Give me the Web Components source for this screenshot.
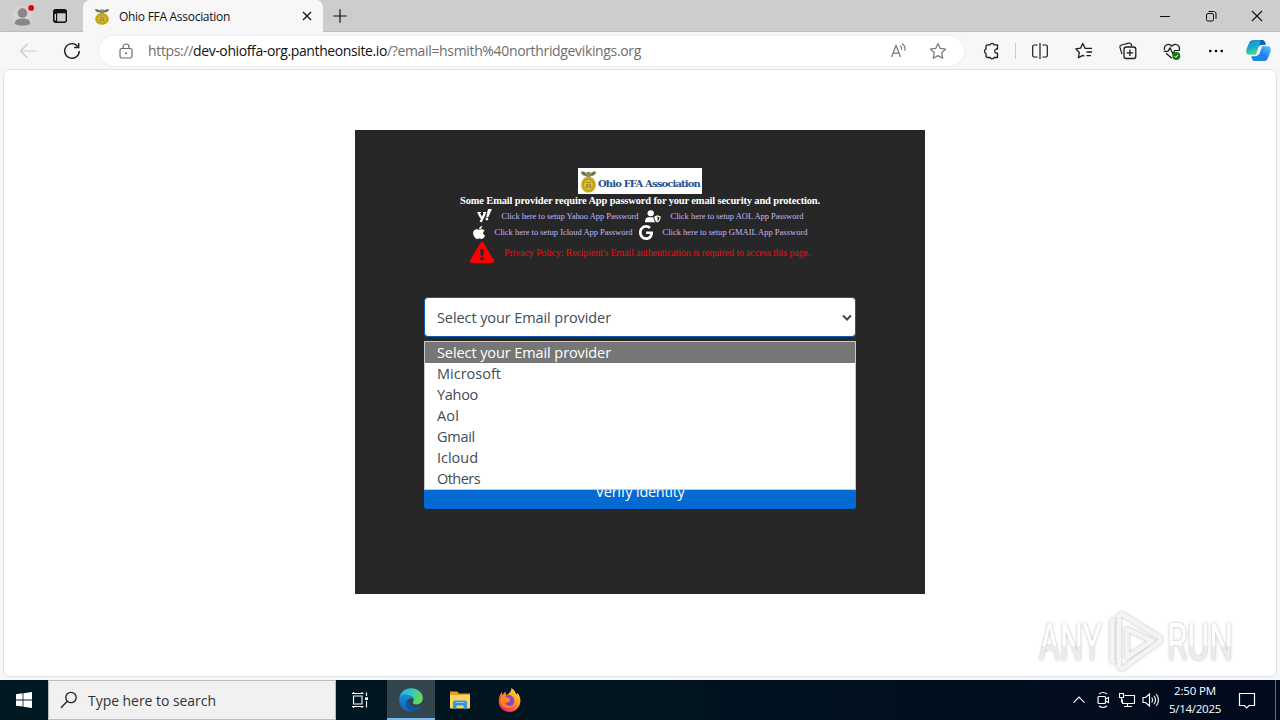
<!DOCTYPE html>
<html lang="en">
<head>
<meta charset="utf-8">
<title>Ohio FFA Association</title>
<style>
  html, body {
    margin: 0;
    height: 100%;
    overflow: hidden;
  }
  body {
    font-family: "Open Sans", "Noto Sans", sans-serif;
    background: #f7f7f7;
  }
</style>
</head>
<body>
<desktop-screen></desktop-screen>

<script>
// [viewBox, markup]
const ICONS = {
  profile: ['0 0 24 24', '<circle cx="12" cy="12" r="11" fill="#d6d4d2"/><circle cx="12" cy="8.4" r="5" fill="#8a8886"/><path d="M4 19.6c0-4 3-5.4 8-5.4s8 1.4 8 5.4c-2 2.6-14 2.6-16 0z" fill="#8a8886"/><circle cx="21" cy="3" r="3" fill="#e3000f"/>'],
  workspaces: ['0 0 16 16', '<rect x="1.7" y="1.7" width="12.6" height="12.6" rx="2" fill="none" stroke="#111" stroke-width="1.4"/><path d="M1.5 4.2V3.5a2 2 0 0 1 2-2h9a2 2 0 0 1 2 2v1.700H5.200v9H3.500a2 2 0 0 1-2-2z" fill="#111"/><path d="M3.300 6v6.500" stroke="#d0d0d0" stroke-width="1.400"/>'],
  emblem: ['0 0 20 24', '<path d="M10 7C7 2 4 1 1 2c1 3 3 4 6 4l3 3 3-3c3 0 5-1 6-4-3-1-6 0-9 5z" fill="#65734a"/><path d="M7.5 2h5l-.5 6h-4z" fill="#888c60"/><path d="M10 7c4 0 8 2.5 8.5 8 .3 5-3.5 8.5-8.5 8.5S1.200 20 1.500 15C2 9.500 6 7 10 7z" fill="#c9ac1c"/><ellipse cx="10" cy="15.500" rx="5.800" ry="5.700" fill="#ddc23a" stroke="#a08a20" stroke-width=".8"/><path d="M7 13h6M7 15.500h6M6.500 18h7M8 15.500v2.500M12 15.500v2.500" stroke="#857a2c" stroke-width=".9" fill="none"/>'],
  close: ['0 0 12 12', '<path d="M2 2l8 8M10 2l-8 8" stroke="#111" stroke-width="1.300"/>'],
  plus: ['0 0 16 16', '<path d="M8 1.300v13.400M1.300 8h13.400" stroke="#111" stroke-width="1.200"/>'],
  minimize: ['0 0 12 12', '<path d="M1 6.500h10" stroke="#111"/>'],
  restore: ['0 0 12 12', '<rect x="1.500" y="3.500" width="7" height="7.500" rx="1.500" fill="none" stroke="#111"/><path d="M3.500 1.500h5a2.200 2.200 0 0 1 2.500 2.500v5" fill="none" stroke="#111"/>'],
  winclose: ['0 0 12 12', '<path d="M1 1l10 10M11 1L1 11" stroke="#111" stroke-width="1.100"/>'],
  back: ['0 0 18 18', '<path d="M17 9H2M8.500 2L1.500 9l7 7" fill="none" stroke="#c9c9c9" stroke-width="1.200"/>'],
  reload: ['0 0 18 18', '<path d="M14.800 4.500A7.300 7.300 0 1 0 16.300 9" fill="none" stroke="#222" stroke-width="1.400"/><path d="M15.700.900v4.600h-4.600" fill="none" stroke="#222" stroke-width="1.400"/>'],
  lock: ['0 0 16 18', '<rect x="2" y="6.500" width="12" height="9.500" rx="1.800" fill="none" stroke="#6b6b6b" stroke-width="1.200"/><path d="M5 6.500V5a3 3 0 0 1 6 0v1.500" fill="none" stroke="#6b6b6b" stroke-width="1.200"/><circle cx="8" cy="11.300" r="1" fill="#6b6b6b"/>'],
  read: ['0 0 18 18', '<path d="M2.500 15L7 3.500 11.500 15M4 11.200h6" fill="none" stroke="#767676" stroke-width="1.200"/><path d="M11.200 3.800q2 1.500 1.300 4M13 1.500q4.200 3 2.600 7.300" fill="none" stroke="#767676" stroke-width="1.100"/>'],
  star: ['0 0 18 18', '<path d="M9 1.500l2.300 4.900 5.300.700-3.900 3.700 1 5.400L9 13.600l-4.700 2.600 1-5.400L1.400 7.100l5.300-.700z" fill="none" stroke="#767676" stroke-width="1.200" stroke-linejoin="round"/>'],
  puzzle: ['0 0 18 18', '<path d="M5.500 2.800h2.700a2 2 0 0 1 3.800 0h3.500v4.200h-1.300a2.200 2.200 0 0 0 0 4.200h1.300v4.300H12a2 2 0 0 1-3.800 0H5.500A1.500 1.500 0 0 1 4 14v-2.700a2.200 2.200 0 0 1 0-4.200V4.300a1.500 1.500 0 0 1 1.500-1.500z" fill="none" stroke="#1b1b1b" stroke-width="1.300" stroke-linejoin="round"/>'],
  split: ['0 0 18 18', '<path d="M6.500 3H3.300A1.500 1.500 0 0 0 1.700 4.500v9A1.500 1.500 0 0 0 3.300 15h3.200M11.500 3h3.200a1.500 1.500 0 0 1 1.600 1.500v9a1.500 1.500 0 0 1-1.600 1.500h-3.200M9 1v16" fill="none" stroke="#1b1b1b" stroke-width="1.200"/>'],
  favorites: ['0 0 18 18', '<path d="M11 6.300h-1L7.700 1.500 5.500 6.200.800 6.900l3.500 3.600-.900 5.300 4.300-2.400 1.600.900M11 6.300h6M11.500 10h5.500M11.500 13.600h4.500" fill="none" stroke="#1b1b1b" stroke-width="1.300" stroke-linejoin="round"/>'],
  collections: ['0 0 18 18', '<path d="M3 12.200L1 5.400A2 2 0 0 1 2.400 3l7.500-1.900A2 2 0 0 1 12.300 2.500l.400 1.500" fill="none" stroke="#1b1b1b" stroke-width="1.200"/><rect x="5" y="5" width="11.800" height="11.500" rx="2.300" fill="none" stroke="#1b1b1b" stroke-width="1.300"/><path d="M10.900 7.500v6.600M7.600 10.800h6.600" stroke="#1b1b1b" stroke-width="1.300"/>'],
  essentials: ['0 0 18 18', '<path d="M1.500 8C.500 2.500 6 .800 8.800 4.200 11.500.800 17.500 2.500 16.200 8M3 11.200l5.800 5" fill="none" stroke="#1b1b1b" stroke-width="1.300"/><path d="M.700 9.300H5l2-3.500 3 6.200 1.700-3.500H17" fill="none" stroke="#1b1b1b" stroke-width="1.200"/><circle cx="13.300" cy="14" r="4" fill="#107c10"/><path d="M11.500 14l1.300 1.300 2.300-2.500" fill="none" stroke="#fff"/>'],
  more: ['0 0 18 18', '<circle cx="3.300" cy="9" r="1.300"/><circle cx="9" cy="9" r="1.300"/><circle cx="14.700" cy="9" r="1.300"/>'],
  copilot: ['0 0 24 24', '<defs><linearGradient id="a" x1="0" y1="0" x2=".400" y2="1"><stop offset="0" stop-color="#1687d9"/><stop offset=".500" stop-color="#18aacd"/><stop offset="1" stop-color="#57d68c"/></linearGradient><linearGradient id="b" x1="1" y1="0" x2="0" y2="1"><stop offset="0" stop-color="#5bc4fb"/><stop offset=".500" stop-color="#267ff0"/><stop offset="1" stop-color="#118fd8"/></linearGradient></defs><path d="M7.500 1h8q2 0 2.600 2L19 6h-4c-2 0-2.500 2-3 4l-2 6.500H3C0 16.500-.300 13 .700 10L3 4Q4 1 7.500 1z" fill="url(#a)"/><path d="M14 1h1.500q2 0 2.600 2L19 6h-4l-2 1z" fill="#125fac"/><path d="M16.500 23h-8q-2 0-2.600-2L5 18h4c2 0 2.500-2 3-4l2-6.500h7c3 0 3.300 3.500 2.300 6.500L21 20q-1 3-4.500 3z" fill="url(#b)"/><path d="M12.500 7.500h3l-3 9h-3z" fill="#f3fbff"/>'],
  yahoo: ['0 0 15 14', '<path d="M1.700 4l2.800 5.200M8 4L3.700 13" stroke="#fff" stroke-width="2.300" fill="none"/><path d="M.300 3.500h3.700M6 3.500h3.300" stroke="#fff" stroke-width="1"/><path d="M11 0h4l-3.600 8H9.300z" fill="#fff"/><circle cx="9.900" cy="10" r="1.400" fill="#fff"/>'],
  usershield: ['0 0 16 14', '<circle cx="5.700" cy="3.500" r="3.200" fill="#fff"/><path d="M0 13.200c0-4.200 1.500-5.500 4-5.500h3.500l1 .300c0 2 .700 4 2 5.200z" fill="#fff"/><path d="M12.500 5.700l3.200 1.300c0 3.200-1 5.200-3.200 6.500-2.200-1.300-3.200-3.300-3.200-6.500z" fill="#fff"/><path d="M12.500 7v5c1.200-.900 1.900-2.200 2-4.200z" fill="#272727"/>'],
  apple: ['0 30 376 452', '<path fill="#fff" d="M318.700 268.700c-.200-36.700 16.400-64.400 50-84.800-18.800-26.900-47.200-41.700-84.700-44.600-35.500-2.800-74.300 20.700-88.500 20.700-15 0-49.400-19.700-76.400-19.700C63.300 141.200 4 184.800 4 273.500q0 39.300 14.400 81.200c12.800 36.700 59 126.700 107.200 125.200 25.200-.600 43-17.900 75.800-17.900 31.800 0 48.300 17.900 76.400 17.900 48.600-.700 90.400-82.500 102.600-119.300-65.200-30.700-61.700-90-61.700-91.900zm-56.600-164.200c27.300-32.400 24.800-61.900 24-72.500-24.100 1.400-52 16.400-67.900 34.900-17.500 19.800-27.800 44.300-25.600 71.900 26.100 2 49.900-11.400 69.500-34.300z"/>'],
  google: ['0 8 488 496', '<path fill="#fff" d="M488 261.800C488 403.300 391.100 504 248 504 110.800 504 0 393.200 0 256S110.800 8 248 8c66.800 0 123 24.500 166.300 64.900l-67.500 64.900C258.500 52.600 94.300 116.600 94.300 256c0 86.500 69.100 156.600 153.700 156.600 98.200 0 135-70.400 140.800-106.900H248v-85.300h236.100c2.300 12.700 3.900 24.900 3.900 41.400z"/>'],
  warning: ['0 0 576 512', '<path fill="#f00" d="M569.500 440C588 472 564.800 512 527.900 512H48.100c-37 0-60-40-41.600-72L246.400 24c18.500-32 64.700-32 83.200 0zM288 354a46 46 0 1 0 0 92 46 46 0 0 0 0-92zm-43.700-165.300l7.400 136c.400 6.300 5.600 11.300 12 11.300h48.600c6.400 0 11.600-5 12-11.300l7.400-136c.400-6.900-5.100-12.700-12-12.700h-63.400c-6.900 0-12.400 5.800-12 12.700z"/>'],
  caret: ['0 0 10 8', '<path d="M1 1.500l4 4 4-4" fill="none" stroke="#444" stroke-width="2"/>'],
  windows: ['0 0 16 16', '<path d="M0 2.200l6.600-.900v6.200H0zM7.400 1.200L16 0v7.500H7.400zM0 8.400h6.600v6.200L0 13.700zM7.400 8.400H16V16l-8.600-1.200z" fill="#fff"/>'],
  search: ['0 0 18 18', '<circle cx="11" cy="6.500" r="5.200" fill="none" stroke="#222" stroke-width="1.300"/><path d="M7.200 10.300L1 16.700" stroke="#222" stroke-width="1.400"/>'],
  taskview: ['0 0 18 18', '<path d="M1 2.500h11.500M1 15.500h11.500M2.500 5h8.500v8H2.500zM2.500 2.500V1M11 2.500V1M2.500 15.500V17M11 15.500V17M15.500 1.500v3.500M15.500 10v6.500" fill="none" stroke="#fff" stroke-width="1.100"/><path d="M14 6.300h3v2.700h-3z" fill="#fff"/>'],
  edge: ['0 0 24 24', '<defs><linearGradient id="e" x1="0" y1="0" x2="1" y2=".300"><stop offset="0" stop-color="#2aa7db"/><stop offset=".500" stop-color="#30c5cd"/><stop offset="1" stop-color="#63d956"/></linearGradient><linearGradient id="f" x1="0" y1="0" x2="0" y2="1"><stop offset="0" stop-color="#168fd8"/><stop offset="1" stop-color="#1264b8"/></linearGradient></defs><path d="M.300 11C1 4 6 .200 12 .200c7 0 11.800 4.600 11.800 9.800 0 4-3 6.400-6.500 6.400-2.500 0-4-.900-3.500-1.900 2.600-3-.300-7-4.800-6.900C5 7.700 1 9 .300 11z" fill="url(#e)"/><path d="M.200 12C.400 8 4 6 8 6.400c3 .300 5.500 2 5.700 4.500-1-1.400-4.600-.500-5.200 2.600C7.600 18 12 22 17 20.400c2-.600 3.500-1 4.600-1.800C19 22.300 16 23.800 12 23.800 5 23.800 0 18.500.200 12z" fill="url(#f)"/><path d="M8.800 11C4.500 16 8 23 13.200 23.700c4 .100 6.800-2.200 8.600-5 .400-.700-.200-1-.800-.700C15.500 20.500 9 17.500 8.800 11z" fill="#1454a0"/>'],
  folder: ['0 0 22 20', '<path d="M1 1.500h7l2 2h11v5H1z" fill="#e6a21a"/><path d="M1 5h20v13.500H1z" fill="#fcd462"/><path d="M4 12q0-1.500 1.500-1.500h11Q18 10.500 18 12v7h-3.500v-3.500h-7V19H4z" fill="#3995d0"/><path d="M6.500 12.500h9" stroke="#7dc8ef"/>'],
  firefox: ['0 0 24 24', '<defs><linearGradient id="g" x1="1" y1="0" x2=".200" y2="1"><stop offset="0" stop-color="#fff04b"/><stop offset=".450" stop-color="#ff9a1f"/><stop offset=".800" stop-color="#ff4054"/><stop offset="1" stop-color="#e4217b"/></linearGradient></defs><path d="M14 0c3 2 4.500 4 5 6.500L20.500 5C23 8 24 12 23 15.500 21.500 21 17 24 12 24S1.500 20.500.800 15C.300 11 1.500 7 4 4l.700 3L7.500 3.500 8.500 7C10.500 6.500 14 4 14 0z" fill="url(#g)"/><path d="M7 8.500c3-2.500 8-1.500 9.500 2 1.500 4-1 7.500-4.500 7.500-2.500 0-4.500-1.500-5-3.500 3 1 5-.500 6-2-2.500 0-3-2.500-6-4z" fill="#8046d6"/><path d="M3.500 9.500c2-2 5-1.500 6.500.500l3 .500c0 1.500-2 2-3 3-.700 1.500-2 1.500-3 1 1 3 5 4.500 8 3-3 4-10 3-12-2-.700-2-.500-4 .500-6z" fill="#ff8a16"/>'],
  chevron: ['0 0 12 12', '<path d="M.500 8.700L6 3.200l5.500 5.500" fill="none" stroke="#fff" stroke-width="1.200"/>'],
  meet: ['0 0 16 18', '<rect x="3" y="5.500" width="7.500" height="7" rx="1" fill="none" stroke="#fff" stroke-width="1.200"/><path d="M10.500 8l3-1.500v5l-3-1.500M4 3q4-3 8 0M4 15q4 3 8 0" fill="none" stroke="#fff" stroke-width="1.100"/>'],
  network: ['0 0 18 18', '<path d="M6.500 4.500h10v8h-12v-4M9.500 12.500v3M6 15.500h8M1.500 2.500h4v4h-4zM3.500 6.500v5" fill="none" stroke="#fff" stroke-width="1.100"/>'],
  volume: ['0 0 18 18', '<path d="M1 6.500h2.500L7.500 3v12l-4-3.500H1zM9.700 6.500q1.600 2.500 0 5M12 4.800q3 4.200 0 8.400M14.300 3q4.300 6 0 12" fill="none" stroke="#fff" stroke-width="1.100"/>'],
  notice: ['0 0 18 18', '<path d="M1.500 2.500h15v12H11l-2.300 2.300-2.200-2.300h-5z" fill="none" stroke="#fff" stroke-width="1.200"/>']
};

class UiIcon extends HTMLElement {
  connectedCallback() {
    const [box, body] = ICONS[this.getAttribute('name')];
    const w = this.getAttribute('w') || 18;
    const h = this.getAttribute('h') || w;
    this.attachShadow({ mode: 'open' }).innerHTML = `
      <style>
        :host { display: block; flex: none; }
        svg { display: block; }
      </style>
      <svg width="${w}" height="${h}" viewBox="${box}" preserveAspectRatio="none">${body}</svg>
    `;
  }
}
customElements.define('ui-icon', UiIcon);

// One line of text, tracked so that it takes up the given width
class TextRun extends HTMLElement {
  connectedCallback() {
    this.attachShadow({ mode: 'open' }).innerHTML = `
      <style>
        :host { display: block; flex: none; }
        span { display: block; width: max-content; white-space: nowrap; }
      </style>
      <span><slot></slot></span>
    `;
    const span = this.shadowRoot.querySelector('span');
    const target = Number(this.getAttribute('w'));
    const natural = span.getBoundingClientRect().width;
    span.style.letterSpacing = (target - natural) / this.textContent.length + 'px';
    this.style.width = target + 'px';
  }
}
customElements.define('text-run', TextRun);

class TabStrip extends HTMLElement {
  connectedCallback() {
    this.attachShadow({ mode: 'open' }).innerHTML = `
      <style>
        :host {
          display: flex;
          height: 32px;
          background: #cdcdcd;
          box-shadow: inset 0 -1px #bdbdbd;
          font-size: 12px;
          color: #111;
        }
        .left {
          display: flex;
          align-items: center;
          width: 83px;
          box-sizing: border-box;
          padding-left: 11px;
          gap: 18px;
        }
        .tab {
          display: flex;
          align-items: center;
          width: 240px;
          box-sizing: border-box;
          padding: 0 10px 0 11px;
          background: #f7f7f7;
          border-radius: 7px 7px 0 0;
        }
        .tab text-run { margin-left: 9px; }
        .tab .x { margin-left: auto; }
        .new {
          display: flex;
          align-items: center;
          padding-left: 9px;
        }
        .controls {
          margin-left: auto;
          display: flex;
          align-items: center;
        }
        .controls div {
          width: 46px;
          display: flex;
          justify-content: center;
        }
      </style>
      <div class="left">
        <ui-icon name="profile" w="23"></ui-icon>
        <ui-icon name="workspaces" w="16"></ui-icon>
      </div>
      <div class="tab">
        <ui-icon name="emblem" w="16" h="17"></ui-icon>
        <text-run w="111">Ohio FFA Association</text-run>
        <ui-icon class="x" name="close" w="12"></ui-icon>
      </div>
      <div class="new"><ui-icon name="plus" w="16"></ui-icon></div>
      <div class="controls">
        <div><ui-icon name="minimize" w="12"></ui-icon></div>
        <div><ui-icon name="restore" w="12"></ui-icon></div>
        <div><ui-icon name="winclose" w="12"></ui-icon></div>
      </div>
    `;
  }
}
customElements.define('tab-strip', TabStrip);

class ToolBar extends HTMLElement {
  connectedCallback() {
    const tools = ['split', 'favorites', 'collections', 'essentials', 'more'];
    this.attachShadow({ mode: 'open' }).innerHTML = `
      <style>
        :host {
          display: flex;
          align-items: center;
          height: 37px;
          background: #f7f7f7;
        }
        .cell {
          width: 44px;
          display: flex;
          justify-content: center;
        }
        .nav {
          display: flex;
          width: 99px;
          box-sizing: border-box;
          padding-left: 6px;
        }
        .address {
          display: flex;
          align-items: center;
          width: 865px;
          height: 30px;
          box-sizing: border-box;
          padding: 0 17px 0 19px;
          background: #fff;
          border-radius: 15px;
          box-shadow: 0 0 2px #ddd;
          font-size: 14px;
          color: #6e6e6e;
        }
        .url { display: flex; margin-left: 14px; }
        .url .host { color: #111; }
        .actions { display: flex; margin-left: auto; gap: 22px; }
        .puzzle { margin-left: 5px; }
        .line { width: 1px; height: 16px; margin: 0 2px; background: #ccc; }
        .copilot { width: 40px; }
      </style>
      <div class="nav">
        <div class="cell"><ui-icon name="back"></ui-icon></div>
        <div class="cell"><ui-icon name="reload"></ui-icon></div>
      </div>
      <div class="address">
        <ui-icon name="lock" w="16" h="18"></ui-icon>
        <div class="url">
          <text-run w="45">https://</text-run><text-run class="host" w="194">dev-ohioffa-org.pantheonsite.io</text-run><text-run w="254">/?email=hsmith%40northridgevikings.org</text-run>
        </div>
        <div class="actions">
          <ui-icon name="read"></ui-icon>
          <ui-icon name="star"></ui-icon>
        </div>
      </div>
      <div class="cell puzzle"><ui-icon name="puzzle"></ui-icon></div>
      <div class="line"></div>
      ${tools.map(t => `<div class="cell"><ui-icon name="${t}"></ui-icon></div>`).join('')}
      <div class="cell copilot"><ui-icon name="copilot" w="25" h="23"></ui-icon></div>
    `;
  }
}
customElements.define('tool-bar', ToolBar);

class ProviderSelect extends HTMLElement {
  connectedCallback() {
    const options = [
      ['Select your Email provider', 174],
      ['Microsoft', 64],
      ['Yahoo', 41],
      ['Aol', 22],
      ['Gmail', 38],
      ['Icloud', 41],
      ['Others', 43]
    ];
    this.attachShadow({ mode: 'open' }).innerHTML = `
      <style>
        :host {
          display: block;
          position: relative;
          font-family: "Open Sans", "Noto Sans", sans-serif;
          font-size: 14.5px;
          color: #414b57;
        }
        .field {
          display: flex;
          align-items: center;
          justify-content: space-between;
          height: 40px;
          box-sizing: border-box;
          padding: 1px 3px 0 12px;
          background: #fff;
          border: 1px solid #0b5cb8;
          border-radius: 4px;
        }
        /* the open list lies over the button below it */
        .menu {
          position: absolute;
          z-index: 2;
          top: 44px;
          left: 0;
          right: 0;
          background: #fff;
          border: 1px solid #c8c8c8;
        }
        .option {
          display: flex;
          align-items: center;
          height: 21px;
          line-height: 21px;
          padding-left: 12px;
        }
        .option.active { background: #767676; color: #fff; }
      </style>
      <div class="field">
        <text-run w="174">Select your Email provider</text-run>
        <ui-icon name="caret" w="10" h="8"></ui-icon>
      </div>
      <div class="menu">
        ${options.map(([label, w], i) => `
          <div class="option ${i === 0 ? 'active' : ''}"><text-run w="${w}">${label}</text-run></div>
        `).join('')}
      </div>
    `;
  }
}
customElements.define('provider-select', ProviderSelect);

class AccessPanel extends HTMLElement {
  connectedCallback() {
    this.attachShadow({ mode: 'open' }).innerHTML = `
      <style>
        :host {
          display: flex;
          flex-direction: column;
          align-items: center;
          width: 570px;
          height: 464px;
          box-sizing: border-box;
          padding-top: 38px;
          background: #272727;
          font-family: "Liberation Serif", serif;
        }
        .logo {
          display: flex;
          align-items: center;
          width: 124px;
          height: 26px;
          box-sizing: border-box;
          padding-left: 2px;
          gap: 1px;
          background: #fff;
          font-family: "DejaVu Serif", serif;
          font-size: 10px;
          font-weight: bold;
          color: #24508f;
        }
        .logo text-run { padding-top: 5px; }
        .lead {
          height: 14px;
          line-height: 14px;
          font-size: 10.5px;
          font-weight: bold;
          color: #fff;
        }
        .row {
          display: flex;
          align-items: center;
          height: 16px;
          font-size: 8.5px;
          color: #c3b8f3;
        }
        .row text-run { margin: 0 6px 0 10px; }
        .row text-run:last-child { margin-right: 0; }
        .row.alert { height: 24px; font-size: 10px; color: #f00; }
        .form {
          width: 432px;
          margin-top: 33px;
        }
        .submit {
          display: flex;
          justify-content: center;
          align-items: center;
          height: 36px;
          margin-top: 136px;
          background: #0369d3;
          border-radius: 3px;
          font-family: "Open Sans", sans-serif;
          font-size: 14.5px;
          color: #fff;
        }
      </style>
      <div class="logo">
        <ui-icon name="emblem" w="17" h="23"></ui-icon>
        <text-run w="102">Ohio FFA Association</text-run>
      </div>
      <div class="lead"><text-run w="360">Some Email provider require App password for your email security and protection.</text-run></div>
      <div class="row">
        <ui-icon name="yahoo" w="15" h="14"></ui-icon>
        <text-run w="137">Click here to setup Yahoo App Password</text-run>
        <ui-icon name="usershield" w="16" h="13"></ui-icon>
        <text-run w="133">Click here to setup AOL App Password</text-run>
      </div>
      <div class="row">
        <ui-icon name="apple" w="12" h="13"></ui-icon>
        <text-run w="138">Click here to setup Icloud App Password</text-run>
        <ui-icon name="google" w="14" h="15"></ui-icon>
        <text-run w="145">Click here to setup GMAIL App Password</text-run>
      </div>
      <div class="row alert">
        <ui-icon name="warning" w="24" h="21"></ui-icon>
        <text-run w="306">Privacy Policy: Recipient's Email authentication is required to access this page.</text-run>
      </div>
      <div class="form">
        <provider-select></provider-select>
        <div class="submit"><text-run w="89">Verify Identity</text-run></div>
      </div>
    `;
  }
}
customElements.define('access-panel', AccessPanel);

class WaterMark extends HTMLElement {
  connectedCallback() {
    this.attachShadow({ mode: 'open' }).innerHTML = `
      <style>
        :host { display: block; }
        svg { display: block; filter: drop-shadow(0 0 1.5px #bbb); }
        text { font: 400 52px Roboto, sans-serif; }
      </style>
      <svg width="204" height="72" viewBox="0 0 204 72">
        <defs>
          <linearGradient id="w" x1="0" y1="0" x2="0" y2="1">
            <stop offset=".55" stop-color="#fff"/>
            <stop offset=".55" stop-color="#ececec"/>
          </linearGradient>
        </defs>
        <g fill="url(#w)">
          <text x="4" y="55" textLength="63" lengthAdjust="spacingAndGlyphs">ANY</text>
          <text x="132" y="55" textLength="66" lengthAdjust="spacingAndGlyphs">RUN</text>
        </g>
        <path d="M80 14l-3 2v40l3 2M87 9l37 23q4 2 0 5L87 64l-3-2V11zM92 24v28l25-16z" fill="none" stroke="#f4f4f4" stroke-width="4.5" stroke-linejoin="round"/>
      </svg>
    `;
  }
}
customElements.define('water-mark', WaterMark);

class TaskBar extends HTMLElement {
  connectedCallback() {
    this.attachShadow({ mode: 'open' }).innerHTML = `
      <style>
        :host {
          display: flex;
          height: 40px;
          background: linear-gradient(90deg, #001a22, #001420 50%, #020a1d);
          color: #fff;
        }
        .cell {
          display: flex;
          align-items: center;
          justify-content: center;
          width: 48px;
        }
        .search {
          display: flex;
          align-items: center;
          width: 288px;
          box-sizing: border-box;
          padding-left: 11px;
          gap: 10px;
          background: #f1f1f1;
          border: 1px solid #bcbcbc;
          font-size: 14px;
          color: #333;
        }
        .edge {
          margin-left: 3px;
          background: #33454d;
          box-shadow: inset 0 -2px #76b9ed;
        }
        .files { width: 50px; }
        .tray { display: flex; margin-left: auto; }
        .tray .cell { width: 24px; }
        .clock {
          display: flex;
          flex-direction: column;
          align-items: center;
          justify-content: center;
          width: 64px;
          font-size: 11.5px;
          line-height: 18px;
        }
        .tray .notice { width: 40px; }
        .peek { width: 4px; margin-left: 8px; border-left: 1px solid #6a7080; }
      </style>
      <div class="cell"><ui-icon name="windows" w="16"></ui-icon></div>
      <div class="search">
        <ui-icon name="search"></ui-icon>
        <text-run w="128">Type here to search</text-run>
      </div>
      <div class="cell"><ui-icon name="taskview"></ui-icon></div>
      <div class="cell edge"><ui-icon name="edge" w="24"></ui-icon></div>
      <div class="cell files"><ui-icon name="folder" w="22" h="20"></ui-icon></div>
      <div class="cell"><ui-icon name="firefox" w="23" h="24"></ui-icon></div>
      <div class="tray">
        <div class="cell"><ui-icon name="chevron" w="12"></ui-icon></div>
        <div class="cell"><ui-icon name="meet" w="16" h="18"></ui-icon></div>
        <div class="cell"><ui-icon name="network"></ui-icon></div>
        <div class="cell"><ui-icon name="volume"></ui-icon></div>
        <div class="clock">
          <text-run w="42">2:50 PM</text-run>
          <text-run w="52">5/14/2025</text-run>
        </div>
        <div class="cell notice"><ui-icon name="notice"></ui-icon></div>
        <div class="peek"></div>
      </div>
    `;
  }
}
customElements.define('task-bar', TaskBar);

class DesktopScreen extends HTMLElement {
  connectedCallback() {
    this.attachShadow({ mode: 'open' }).innerHTML = `
      <style>
        :host {
          display: flex;
          flex-direction: column;
          position: relative;
          width: 1280px;
          height: 720px;
          background: #f5f6f7;
        }
        .page {
          display: flex;
          justify-content: center;
          align-items: flex-start;
          height: 608px;
          box-sizing: border-box;
          margin: 0 3px 3px;
          padding-top: 60px;
          background: #fff;
          border: 1px solid #e2e2e2;
          border-radius: 7px;
        }
        /* floats over the page corner */
        water-mark { position: absolute; left: 1035px; top: 605px; }
      </style>
      <tab-strip></tab-strip>
      <tool-bar></tool-bar>
      <div class="page"><access-panel></access-panel></div>
      <task-bar></task-bar>
      <water-mark></water-mark>
    `;
  }
}
customElements.define('desktop-screen', DesktopScreen);
</script>
</body>
</html>
